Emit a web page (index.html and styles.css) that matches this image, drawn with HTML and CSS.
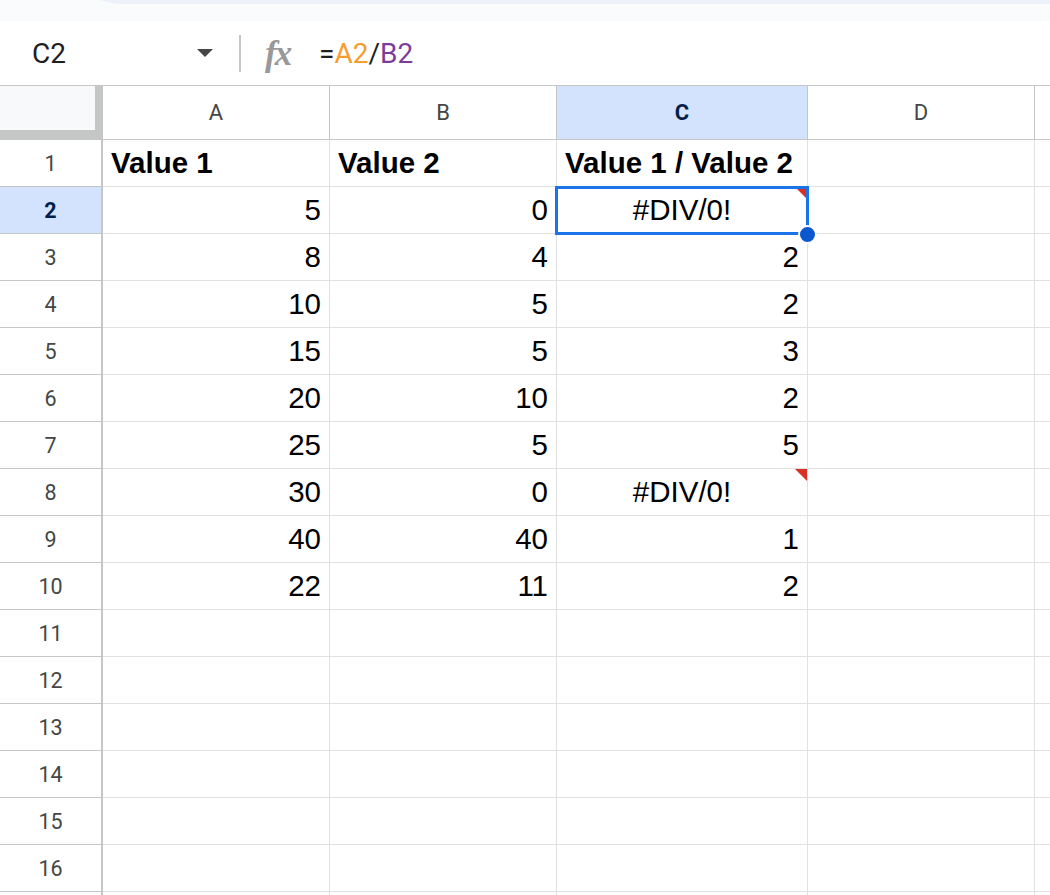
FILE: index.html
```html
<!DOCTYPE html>
<html lang="en">
<head>
  <meta charset="UTF-8" />
  <meta name="viewport" content="width=device-width, initial-scale=1.0" />
  <title>Sheet - DIV/0</title>
  <link rel="stylesheet" href="styles.css">
</head>
<body>
  <div class="top-strip">
    <div class="toolbar-edge"></div>
  </div>

  <div class="formula-bar">
    <div class="name-box">
      <span>C2</span>
      <span class="caret"></span>
    </div>
    <div class="divider"></div>
    <span class="fx">fx</span>
    <div class="formula">=<span class="ref-a">A2</span>/<span class="ref-b">B2</span></div>
  </div>

  <div class="sheet" id="sheet">
    <div class="corner"><div class="corner-inner"></div></div>
    <div class="col-head">A</div>
    <div class="col-head">B</div>
    <div class="col-head active">C</div>
    <div class="col-head">D</div>
    <div class="col-head"></div>
    <!-- Rows will be injected by JS -->
  </div>

  <script>
  const data = [
    ["Value 1", "Value 2", "Value 1 / Value 2"],
    [5, 0, "#DIV/0!"],
    [8, 4, 2],
    [10, 5, 2],
    [15, 5, 3],
    [20, 10, 2],
    [25, 5, 5],
    [30, 0, "#DIV/0!"],
    [40, 40, 1],
    [22, 11, 2]
  ];
  const numberedRows = 16;
  const sheet = document.getElementById("sheet");

  function makeCell(value, rowIndex) {
    const cell = document.createElement("div");
    cell.classList.add("cell");
    if (value === undefined || value === "") return cell;

    if (rowIndex === 0) {
      cell.classList.add("bold");
    } else if (typeof value === "number") {
      cell.classList.add("num");
    } else if (String(value).startsWith("#")) {
      cell.classList.add("error");
      const flag = document.createElement("span");
      flag.classList.add("error-flag");
      cell.appendChild(flag);
    }
    const text = document.createElement("span");
    text.textContent = value;
    cell.appendChild(text);
    return cell;
  }

  function buildRows() {
    // one extra row at the bottom, only its top edge shows
    for (let r = 0; r <= numberedRows; r++) {
      const head = document.createElement("div");
      head.classList.add("row-head");
      if (r === 1) head.classList.add("active");
      if (r < numberedRows) head.textContent = r + 1;
      sheet.appendChild(head);

      const values = data[r] || [];
      for (let c = 0; c < 5; c++) {
        const cell = makeCell(values[c], r);
        // C2 is the selected cell
        if (r === 1 && c === 2) {
          cell.classList.add("selected");
          const sel = document.createElement("div");
          sel.classList.add("selection");
          const handle = document.createElement("div");
          handle.classList.add("handle");
          cell.appendChild(sel);
          cell.appendChild(handle);
        }
        sheet.appendChild(cell);
      }
    }
  }

  buildRows();
  </script>
</body>
</html>
```

FILE: styles.css
```css
html, body {
  margin: 0;
  padding: 0;
  width: 1050px;
  height: 895px;
  overflow: hidden;
  background: #fff;
}

body {
  font-family: Roboto, "Liberation Sans", sans-serif;
}

/* toolbar remnant at the very top */
.top-strip {
  height: 21px;
  background: #f9fbfd;
  padding-left: 62px;
  overflow: hidden;
}

.toolbar-edge {
  height: 64px;
  margin-top: -60px;
  background: #edf2fa;
  border-bottom-left-radius: 60px;
}

/* formula bar */
.formula-bar {
  display: flex;
  align-items: center;
  height: 64px;
  border-bottom: 1px solid #c4c7c5;
  background: #fff;
}

.name-box {
  display: flex;
  align-items: center;
  justify-content: space-between;
  box-sizing: border-box;
  width: 239px;
  padding: 0 26px 0 32px;
  font-size: 28px;
  color: #1f1f1f;
}

.caret {
  width: 0;
  height: 0;
  border-left: 8.5px solid transparent;
  border-right: 8.5px solid transparent;
  border-top: 8px solid #444746;
}

.divider {
  width: 2px;
  height: 37px;
  background: #c7c7c7;
}

.fx {
  margin-left: 24px;
  width: 40px;
  font-family: "Liberation Serif", serif;
  font-style: italic;
  font-weight: bold;
  font-size: 35px;
  letter-spacing: -2px;
  color: #999;
  line-height: 1;
}

.formula {
  margin-left: 14px;
  font-size: 28px;
  color: #1f1f1f;
}

.ref-a {
  color: #f79c2e;
}

.ref-b {
  color: #7e3c9a;
}

/* grid */
.sheet {
  display: grid;
  grid-template-columns: 103px 227px 227px 251px 227px 1fr;
  grid-template-rows: 54px;
  grid-auto-rows: 47px;
}

.corner {
  background: #c4c7c5;
  border-bottom: 1px solid #c4c7c5;
}

.corner-inner {
  width: 95px;
  height: 44px;
  background: #f8f9fa;
}

.col-head {
  display: flex;
  align-items: center;
  justify-content: center;
  border-right: 1px solid #c4c7c5;
  border-bottom: 1px solid #c4c7c5;
  font-size: 22px;
  color: #444746;
}

.row-head {
  display: flex;
  align-items: center;
  justify-content: center;
  border-right: 2px solid #c4c7c5;
  border-bottom: 1px solid #c4c7c5;
  font-size: 21.5px;
  color: #444746;
}

.col-head.active,
.row-head.active {
  background: #d3e3fd;
  color: #041e49;
  font-weight: bold;
}

.cell {
  position: relative;
  display: flex;
  align-items: center;
  padding: 0 8px;
  border-right: 1px solid #e1e1e1;
  border-bottom: 1px solid #e1e1e1;
  font-family: "Liberation Sans", Arial, sans-serif;
  font-size: 29.5px;
  color: #000;
  white-space: nowrap;
}

.cell.selected {
  z-index: 2;
}

.cell.bold {
  font-weight: bold;
}

.cell.num {
  justify-content: flex-end;
}

.cell.error {
  justify-content: center;
}

.error-flag {
  position: absolute;
  top: 0;
  right: 0;
  width: 0;
  height: 0;
  border-left: 12px solid transparent;
  border-top: 12px solid #d93025;
}

.selection {
  position: absolute;
  top: -1px;
  left: -2px;
  right: -2px;
  bottom: -2px;
  border: 3px solid #1a73e8;
}

.handle {
  position: absolute;
  right: -10px;
  bottom: -11px;
  width: 15px;
  height: 15px;
  border: 2px solid #fff;
  border-radius: 50%;
  background: #0b57d0;
}
```
